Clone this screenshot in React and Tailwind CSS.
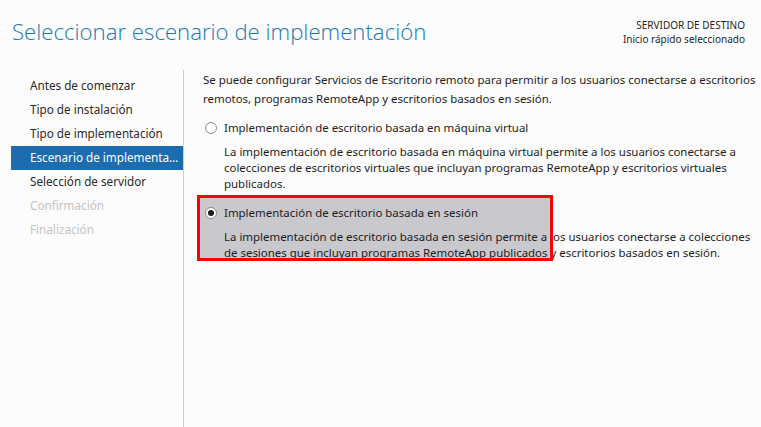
const steps = [
  { label: "Antes de comenzar", state: "done" },
  { label: "Tipo de instalación", state: "done" },
  { label: "Tipo de implementación", state: "done" },
  { label: "Escenario de implementación", state: "active" },
  { label: "Selección de servidor", state: "done" },
  { label: "Confirmación", state: "disabled" },
  { label: "Finalización", state: "disabled" },
];

function Radio({ checked }) {
  return (
    <span className="flex h-[12px] w-[12px] shrink-0 items-center justify-center rounded-full border border-[#8a8a8a] bg-white">
      {checked && <span className="h-[6px] w-[6px] rounded-full bg-[#1a1a1a]" />}
    </span>
  );
}

export default function App() {
  return (
    <div
      className="flex h-[427px] w-[761px] flex-col overflow-hidden bg-[#fcfcfc] text-[#1e1e1e]"
      style={{ fontFamily: '"Noto Sans", "Open Sans", sans-serif' }}
    >
      {/* Header */}
      <div className="flex items-start justify-between pl-[12px] pr-[16px] pt-[17px]">
        <h1
          className="text-[22.2px] font-light leading-[30px] text-[#2277b3]"
          style={{ fontFamily: '"Open Sans", "Noto Sans", sans-serif' }}
        >
          Seleccionar escenario de implementación
        </h1>
        <div className="pt-[1px] text-right text-[10px] leading-[14px] text-[#1e1e1e]">
          <div>SERVIDOR DE DESTINO</div>
          <div>Inicio rápido seleccionado</div>
        </div>
      </div>

      <div className="mt-[23px] flex flex-1">
        {/* Sidebar */}
        <nav className="flex w-[183px] flex-col pl-[11px] pt-[4px]">
          {steps.map((s) => (
            <div
              key={s.label}
              className={
                "flex h-[24px] items-center pl-[19px] pr-[2px] text-[11.7px] " +
                (s.state === "active"
                  ? "bg-[#1c6db0] text-white"
                  : s.state === "disabled"
                  ? "text-[#c4c4c4]"
                  : "text-[#2a2a2a]")
              }
            >
              <span className="truncate">{s.label}</span>
            </div>
          ))}
        </nav>

        <div className="w-px bg-[#cfcfcf]" />

        {/* Content */}
        <main className="flex flex-1 flex-col pl-[19px] pr-[4px] text-[11.45px] leading-[19px]">
          <p>
            Se puede configurar Servicios de Escritorio remoto para permitir a los usuarios conectarse a escritorios
            remotos, programas RemoteApp y escritorios basados en sesión.
          </p>

          <div className="mt-[10px]">
            <label className="flex items-center gap-[7px] pl-[2px]">
              <Radio />
              <span>Implementación de escritorio basada en máquina virtual</span>
            </label>
            <p className="mt-[7px] w-[540px] pl-[21px] leading-[16px]">
              La implementación de escritorio basada en máquina virtual permite a los usuarios conectarse a
              colecciones de escritorios virtuales que incluyan programas RemoteApp y escritorios virtuales
              publicados.
            </p>
          </div>

          <div className="relative mt-[3px] pt-[8px]">
            <div className="absolute left-[-6px] top-0 z-0 h-[65px] w-[355px] bg-[#c8c8cd]" />
            <label className="relative z-10 flex items-center gap-[7px] pl-[2px]">
              <Radio checked />
              <span>Implementación de escritorio basada en sesión</span>
            </label>
            <p className="relative z-10 mt-[7px] pl-[21px] leading-[16px]">
              La implementación de escritorio basada en sesión permite a los usuarios conectarse a colecciones de
              sesiones que incluyan programas RemoteApp publicados y escritorios basados en sesión.
            </p>
            <div className="pointer-events-none absolute left-[-6px] top-0 z-20 h-[66px] w-[356px] border-[3px] border-[#ff0000]" />
          </div>
        </main>
      </div>
    </div>
  );
}
